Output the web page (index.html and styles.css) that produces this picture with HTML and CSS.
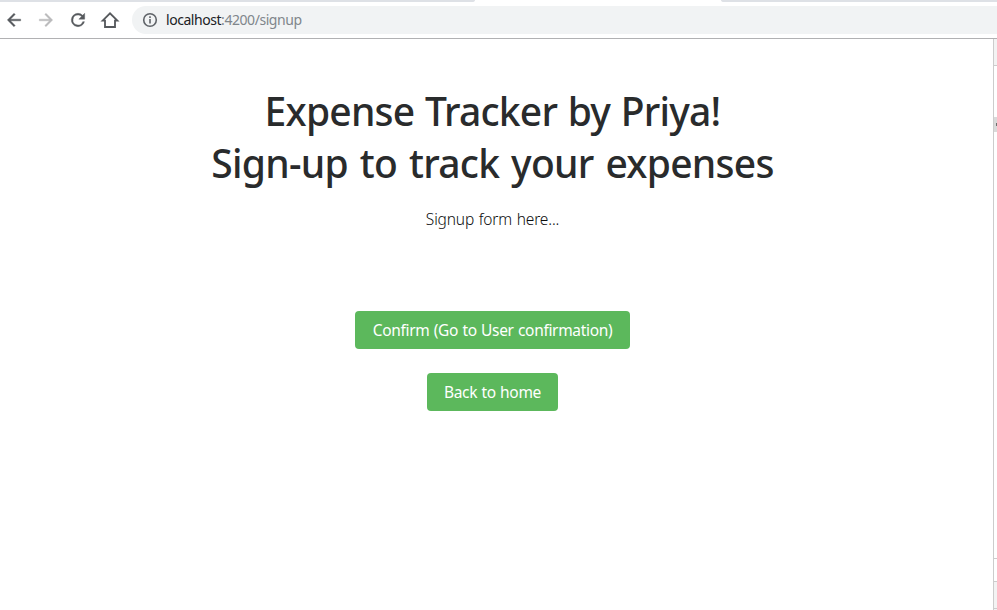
FILE: index.html
```html
<!DOCTYPE html>
<html lang="en">
<head>
<meta charset="utf-8">
<title>Expense Tracker</title>
<link rel="stylesheet" href="styles.css">
</head>
<body>
<header class="browser">
  <div class="tabs"><span class="tab-left"></span><span class="tab-right"></span></div>
  <nav class="toolbar">
    <svg class="icon" viewBox="0 0 24 24"><path d="M20 11H7.83l5.59-5.59L12 4l-8 8 8 8 1.41-1.41L7.83 13H20v-2z"/></svg>
    <svg class="icon disabled" viewBox="0 0 24 24"><path d="M12 4l-1.41 1.41L16.17 11H4v2h12.17l-5.58 5.59L12 20l8-8z"/></svg>
    <svg class="icon" viewBox="0 0 24 24"><path d="M17.65 6.35A7.96 7.96 0 0 0 12 4a8 8 0 1 0 7.73 10h-2.08A6 6 0 1 1 12 6c1.66 0 3.14.69 4.22 1.78L13 11h7V4z"/></svg>
    <svg class="icon" viewBox="0 0 24 24"><path class="house" d="M3.2 12.8L12 4l8.8 8.8H18V20.4H6V12.8z"/></svg>
    <div class="address">
      <svg class="info" viewBox="0 0 16 16"><circle cx="8" cy="8" r="6.3"/><path d="M8 7v4.5M8 4.3v1.6"/></svg>
      <span class="url"><span class="host">localhost</span>:4200/signup</span>
    </div>
  </nav>
</header>
<div class="viewport">
  <main class="page">
    <h1><span class="line-one">Expense Tracker by Priya!</span><br><span class="line-two">Sign-up to track your expenses</span></h1>
    <p>Signup form here...</p>
    <button class="btn confirm">Confirm (Go to User confirmation)</button>
    <button class="btn back">Back to home</button>
  </main>
  <aside class="devtools">
    <div class="head"></div>
    <div class="blank"></div>
    <div class="selected"><i></i></div>
    <div class="body"></div>
    <div class="row"></div>
    <div class="drawer"></div>
    <div class="end"></div>
  </aside>
</div>
</body>
</html>
```

FILE: styles.css
```css
* { box-sizing: border-box; }
body {
  margin: 0;
  height: 610px;
  overflow: hidden;
  display: flex;
  flex-direction: column;
  background: #fff;
  font-family: "Segoe UI", "Noto Sans", sans-serif;
}
.browser { height: 39px; flex: none; border-bottom: 1px solid #b1b1b3; }
.tabs { height: 2px; display: flex; justify-content: space-between; }
.tab-left, .tab-right { background: #dee1e6; }
.tab-left { width: 475px; border-bottom-right-radius: 3px 2px; }
.tab-right { width: 276px; border-bottom-left-radius: 3px 2px; }
.toolbar { height: 36px; display: flex; align-items: center; gap: 12px; padding-left: 4px; }
.icon { width: 20px; height: 20px; flex: none; fill: #56595d; stroke: #56595d; stroke-width: .5; }
.icon.disabled { fill: #bababc; stroke: #bababc; }
.icon .house { fill: none; stroke-width: 2.2; }
.address {
  flex: 1;
  height: 28px;
  padding-left: 10px;
  display: flex;
  align-items: center;
  gap: 8px;
  background: #f1f3f4;
  border-radius: 14px 0 0 14px;
}
.info { width: 16px; height: 16px; fill: none; stroke: #5f6368; stroke-width: 1.6; }
.url { font-size: 14px; line-height: 20px; color: #80868b; white-space: nowrap; letter-spacing: -.45px; }
.host { color: #202124; }
.viewport { flex: 1; display: flex; min-height: 0; }
.page {
  flex: 1;
  padding: 46px 8px 0 0;
  display: flex;
  flex-direction: column;
  align-items: center;
  color: #292b2c;
}
h1 { margin: 0; font-size: 39px; font-weight: 500; line-height: 52px; text-align: center; white-space: nowrap; }
.line-one { letter-spacing: -.8px; word-spacing: 1.3px; }
.line-two { letter-spacing: -.72px; word-spacing: 2.4px; }
p { margin: 18px 0 1px; color: #0c0d0e; font-size: 15.5px; line-height: 24px; font-weight: 350; letter-spacing: -.15px; word-spacing: .8px; }
.btn {
  height: 38px;
  padding: 0;
  border: 0;
  border-radius: 4px;
  background: #5cb85c;
  color: #fff;
  font: 400 15.5px/24px "Segoe UI", "Noto Sans", sans-serif;
  letter-spacing: -.32px;
  word-spacing: .6px;
  white-space: nowrap;
}
.confirm { width: 275px; margin-top: 79px; }
.back { width: 131px; margin-top: 24px; }
.devtools { width: 4px; border-left: 1px solid #ccc; display: flex; flex-direction: column; }
.head { height: 27px; background: #f3f3f3; border-bottom: 1px solid #ccc; }
.blank { height: 51px; }
.selected { height: 15px; background: #dadada; display: flex; align-items: center; justify-content: flex-end; }
.selected i { width: 1px; height: 3px; background: #6e6e6e; }
.body { height: 427px; border-bottom: 1px solid #ccc; }
.row { height: 23px; border-bottom: 1px solid #ccc; }
.drawer { height: 27px; background: #f3f3f3; border-bottom: 1px solid #ccc; }
.end { height: 1px; background: #f3f3f3; }
```
